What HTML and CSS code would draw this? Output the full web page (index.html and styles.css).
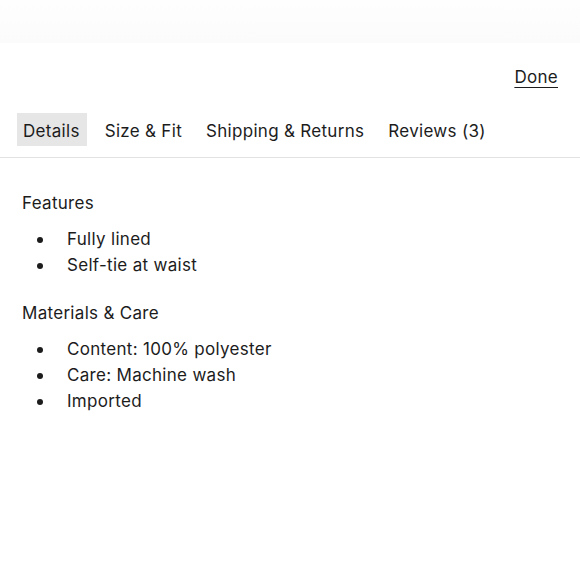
FILE: index.html
```html
<!DOCTYPE html>
<html lang="en">
<head>
<meta charset="utf-8">
<link rel="stylesheet" href="styles.css">
</head>
<body>
<div class="topband"></div>
<div class="done-row"><a class="done" href="#">Done</a></div>
<nav class="tabs">
  <span class="tab active">Details</span>
  <span class="tab">Size &amp; Fit</span>
  <span class="tab">Shipping &amp; Returns</span>
  <span class="tab">Reviews (3)</span>
</nav>
<main class="content">
  <h2 class="section-title">Features</h2>
  <ul class="list">
    <li>Fully lined</li>
    <li>Self-tie at waist</li>
  </ul>
  <h2 class="section-title">Materials &amp; Care</h2>
  <ul class="list">
    <li>Content: 100% polyester</li>
    <li>Care: Machine wash</li>
    <li>Imported</li>
  </ul>
</main>
</body>
</html>
```
FILE: styles.css
```css
* { box-sizing: border-box; }
body {
  margin: 0;
  background: #ffffff;
  font-family: Inter, "Liberation Sans", sans-serif;
  font-size: 17px;
  letter-spacing: 0.3px;
  color: #1c1c1c;
}
.topband {
  height: 43px;
  background: linear-gradient(180deg, #fefefe 0%, #fbfbfb 100%);
}
.done-row {
  display: flex;
  justify-content: flex-end;
  padding: 23px 22px 0 0;
  height: 70px;
}
.done {
  color: #1c1c1c;
  text-decoration: underline;
  text-underline-offset: 4px;
  text-decoration-thickness: 1px;
  line-height: 22px;
}
.tabs {
  display: flex;
  gap: 12px;
  padding: 0 0 11px 17px;
  border-bottom: 1px solid #e2e2e2;
}
.tab {
  padding: 4px 6px 0 6px;
  height: 33px;
  line-height: 29px;
}
.tab.active { background: #e6e6e6; padding-right: 7px; }
.content { padding: 32px 22px 0 22px; }
.section-title {
  margin: 0;
  font-size: 17px;
  font-weight: 400;
  line-height: 26px;
}
.list {
  margin: 10px 0 22px 0;
  padding: 0;
  list-style: none;
}
.list li {
  position: relative;
  padding-left: 45px;
  line-height: 26px;
}
.list li::before {
  content: "";
  position: absolute;
  left: 15px;
  top: 11px;
  width: 6px;
  height: 6px;
  border-radius: 50%;
  background: #1c1c1c;
}
```
